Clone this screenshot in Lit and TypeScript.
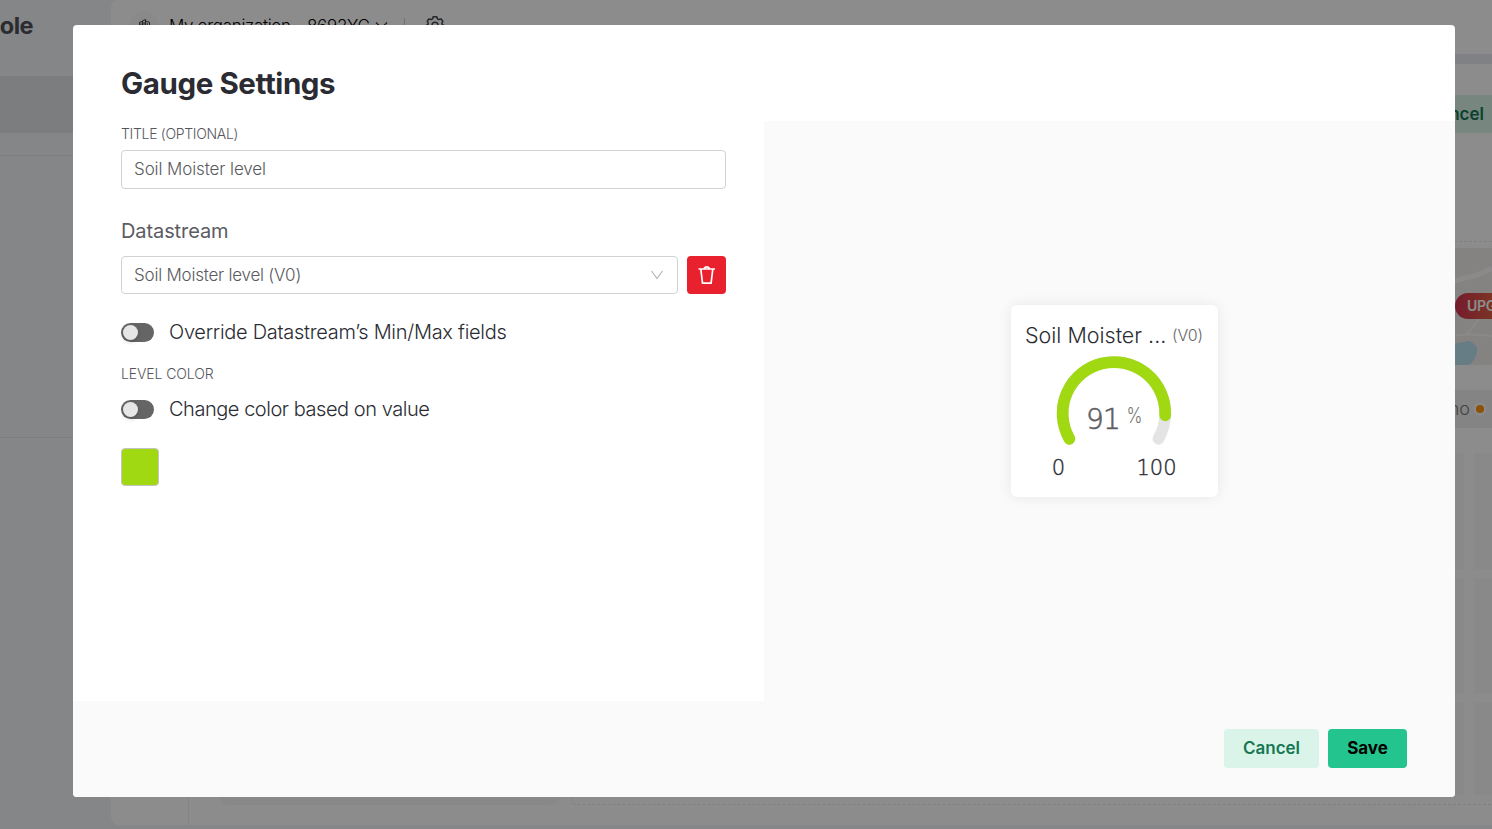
import { LitElement, html, svg, css } from "lit";
import { customElement, property, state } from "lit/decorators.js";

@customElement("gauge-card")
class GaugeCard extends LitElement {
  @property({ type: Number }) value = 91;
  static styles = css`
    :host { display: block; width: 207px; height: 192px; background: #fff; border-radius: 6px; box-shadow: 0 0 14px rgba(0, 0, 0, 0.08); box-sizing: border-box; font-family: Inter, "Liberation Sans", sans-serif; color: #2b2c33; }
    .head { display: flex; align-items: flex-start; height: 51px; padding: 0 15px 0 14px; line-height: 60px; box-sizing: border-box; justify-content: space-between; white-space: nowrap; }
    .name { font-size: 21.5px; font-weight: 300; letter-spacing: 0; }
    .pin { font-size: 16px; font-weight: 300; color: #66676c; letter-spacing: -0.15px; }
    svg { display: block; width: 207px; height: 141px; }
    .track, .level { fill: none; stroke-width: 11.7; stroke-linecap: round; }
    .track { stroke: #e4e4e4; }
    .level { stroke: #a0d911; }
    .num, .lim { font-family: "DejaVu Sans", sans-serif; font-weight: 200; }
    .num { font-size: 28px; letter-spacing: -0.7px; fill: #5c5d63; stroke: #5c5d63; stroke-width: 0.6; }
    .unit { font-size: 21px; font-weight: 300; fill: #777; }
    .lim { font-size: 21px; fill: #2b2c33; stroke: #2b2c33; stroke-width: 0.4; }
  `;
  render() {
    return html`
      <div class="head"><span class="name">Soil Moister ...</span><span class="pin">(V0)</span></div>
      <svg viewBox="0 51 207 141">
        ${svg`
          <path class="track" d="M58.4 133.8A51.3 51.3 0 1 1 147.4 133.8" />
          <path class="level" d="M58.4 133.8A51.3 51.3 0 1 1 154.2 110.3" />
          <text class="num" x="75" y="124">${this.value}</text>
          <text class="unit" x="115.500" y="118" textLength="16" lengthAdjust="spacingAndGlyphs">%</text>
          <text class="lim" x="47.5" y="170" text-anchor="middle">0</text>
          <text class="lim" x="145.500" y="170" text-anchor="middle">100</text>`}
      </svg>`;
  }
}

@customElement("toggle-row")
class ToggleRow extends LitElement {
  @property() label = "";
  static styles = css`
    :host { display: flex; align-items: center; gap: 15px; height: 30px; font-size: 20px; font-weight: 300; color: #2b2c33; }
    .switch { width: 33px; height: 19px; border-radius: 10px; background: #656565; padding: 2px; box-sizing: border-box; }
    .knob { width: 15px; height: 15px; border-radius: 50%; background: #e6e6e6; box-shadow: 0 2px 4px rgba(0, 35, 11, 0.2); }
    .label { white-space: nowrap; letter-spacing: var(--track, 0); }
  `;
  render() {
    return html`<div class="switch"><div class="knob"></div></div><span class="label">${this.label}</span>`;
  }
}

@customElement("console-page")
class ConsolePage extends LitElement {
  static styles = css`
    :host { display: flex; width: 1492px; height: 829px; background: #f3f5f8; overflow: hidden; color: #24252b; }
    * { box-sizing: border-box; }
    .side { width: 111px; flex: none; display: flex; flex-direction: column; }
    .brand { height: 76px; line-height: 52px; font-size: 23.5px; font-weight: 700; width: 33px; display: flex; justify-content: flex-end; letter-spacing: -0.5px; color: #4e5057; }
    .active { height: 57px; background: #e2e3e5; }
    .group { height: 23px; border-bottom: 1px solid #e3e5e8; }
    .group.tall { height: 282px; }
    .main { flex: 1; display: flex; flex-direction: column; min-width: 0; }
    .top { height: 54px; background: #fff; border-top-left-radius: 8px; display: flex; align-items: flex-start; padding-left: 19px; }
    .avatar { width: 28px; height: 28px; margin-top: 11px; border-radius: 50%; background: #f9f9f9; display: flex; align-items: center; justify-content: center; }
    .org { margin-left: 11px; line-height: 52px; font-size: 17px; white-space: pre; font-weight: 300; color: #000; letter-spacing: -0.33px; width: 202px; }
    .chev { margin: 21px 0 0 4px; }
    .bar { width: 1px; height: 16px; margin: 18px 20px 0 16px; background: #ccc; }
    .gear { margin-top: 15px; }
    .strip { height: 10px; background: #eaecf0; }
    .body { flex: 1; background: #fff; display: flex; border-bottom-left-radius: 8px; min-height: 0; }
    .foot { height: 4px; }
    .rail { width: 78px; border-right: 1px solid #f0f0f0; }
    .tools { width: 343px; margin: 77px 10px 20px 29px; background: #f7f7f7; border-radius: 12px; }
    .work { flex: 1; min-width: 0; display: flex; flex-direction: column; align-items: flex-end; }
    .cancel { width: 100px; height: 38px; margin: 31px -12px 108px 0; padding-right: 20px; text-align: right; background: #daf4ea; color: #167852; font-weight: 600; font-size: 17px; line-height: 38px; }
    .canvas { width: 100%; height: 564px; border: 1px dashed #eaeaea; border-right: 0; border-bottom-left-radius: 6px; display: flex; flex-direction: column; align-items: flex-end; padding-top: 6px; }
    .map { width: 80px; height: 117px; background: #f1eeeb; display: flex; flex-direction: column; }
    .map svg { display: block; }
    .tag { width: 80px; height: 38px; margin: 25px 0; background: #f0f0f0; display: flex; align-items: center; justify-content: flex-end; gap: 6px; padding-right: 8px; font-size: 18px; font-weight: 300; color: #77787c; }
    .tag span { margin-top: -2px; }
    .dot { width: 8px; height: 8px; border-radius: 50%; background: #ff930d; box-shadow: 0 0 0 3px #fafafa; }
    .cells { display: grid; grid-template-columns: 60px 60px; grid-template-rows: 116px 116px 92px; gap: 9px 10px; margin-right: -42px; }
    .cell { background: #f9f9f9; }
    .pilltext { font-size: 14px; font-weight: 600; fill: #fff; letter-spacing: -0.3px; }
  `;
  render() {
    return html`
      <div class="side">
        <div class="brand">ole</div>
        <div class="active"></div>
        <div class="group"></div>
        <div class="group tall"></div>
      </div>
      <div class="main">
        <div class="top">
          <div class="avatar">
            <svg width="13" height="14" viewBox="0 0 13 14" fill="none" stroke="#38424a" stroke-width="1"><path d="M4.500 12V2.800L7.500 1.500v10.500M4.500 3.500l-3 .8V12h10V4.300L7.500 3M6 4v7M3 5.500v5M9.200 5v6" /></svg>
          </div>
          <span class="org">My organization - 8692YC</span>
          <svg class="chev" width="13" height="9" viewBox="0 0 13 9" fill="none" stroke="#333" stroke-width="1.1"><path d="M1 1.5 6.5 7 12 1.5" /></svg>
          <i class="bar"></i>
          <svg class="gear" width="20" height="20" viewBox="0 0 20 20" fill="none" stroke="#444950" stroke-width="1.5" stroke-linejoin="round">
            <path d="M8.200 1.800h3.600l.6 2 1.400.7 2.400-.5 1.600 2.400-.9 1.700.3 1.400 2 1.100-.7 3.200-2.100.2-1 1.200.3 2.100-3.200 1.400L10 17.300l-2.400 1.400-3.200-1.400.3-2.100-1-1.200-2.100-.2-.7-3.200 2-1.100.3-1.400-.9-1.700L3.800 4l2.400.5 1.400-.7z" /><circle cx="10" cy="10.300" r="3" />
          </svg>
        </div>
        <div class="strip"></div>
        <div class="body">
          <div class="rail"></div>
          <div class="tools"></div>
          <div class="work">
            <div class="cancel">Cancel</div>
            <div class="canvas">
              <div class="map">
                <svg width="80" height="117" viewBox="1412 248 80 117">
                  <path d="M1440 290C1460 274 1475 280 1492 268" stroke="#fbfbfb" stroke-width="5" fill="none" />
                  <path d="M1440 338Q1465 332 1492 336M1467 334l14-17" stroke="#fafafa" stroke-width="2" fill="none" />
                  <path d="M1440 365v-15l17-7 12-2q10 4 8 11-2 9-8 13z" fill="#bce3f3" />
                  <defs><linearGradient id="pill" x1="1455" x2="1515" gradientUnits="userSpaceOnUse"><stop stop-color="#d53352" /><stop offset="1" stop-color="#e87a3a" /></linearGradient></defs>
                  <rect x="1455" y="293" width="110" height="26" rx="13" fill="url(#pill)" />
                  <text class="pilltext" x="1467" y="311">UPG</text>
                </svg>
              </div>
              <div class="tag"><span>no</span><i class="dot"></i></div>
              <div class="cells">${[1, 2, 3, 4, 5, 6].map(() => html`<div class="cell"></div>`)}</div>
            </div>
          </div>
        </div>
        <div class="foot"></div>
      </div>`;
  }
}

@customElement("app-root")
class AppRoot extends LitElement {
  @state() level = 91;
  static styles = css`
    :host { display: block; position: relative; width: 1492px; height: 829px; overflow: hidden; font-family: Inter, "Liberation Sans", sans-serif; }
    * { box-sizing: border-box; }
    .mask { position: absolute; inset: 0; background: rgba(0, 0, 0, 0.45); padding: 25px 37px 32px 73px; }
    .modal { height: 772px; background: #fff; border-radius: 4px; overflow: hidden; display: flex; flex-direction: column; }
    h1 { margin: 0; height: 96px; padding: 0 48px; line-height: 117px; font-size: 29.5px; font-weight: 650; letter-spacing: -0.4px; color: #2b2c33; white-space: nowrap; }
    .cols { display: flex; height: 580px; }
    .form { width: 691px; padding: 0 38px 0 48px; display: flex; flex-direction: column; }
    .preview { flex: 1; background: #fafafa; padding: 184px 0 0 247px; }
    .cap { font-size: 14px; font-weight: 300; color: #55565c; line-height: 20px; letter-spacing: -0.3px; margin: 3px 0 6px; white-space: nowrap; }
    .field { height: 39px; border: 1px solid #d2d2d4; border-radius: 4px; display: flex; align-items: center; justify-content: space-between; padding: 0 13px 0 12px; font-size: 17px; font-weight: 300; color: #595a60; white-space: nowrap; }
    .title span { letter-spacing: -0.1px; margin-top: -2px; }
    .select { height: 38px; flex: 1; }
    .select span { letter-spacing: -0.22px; }
    h2 { margin: 27px 0 0; height: 40px; line-height: 30px; font-size: 20px; font-weight: 400; color: #5b5c62; letter-spacing: -0.1px; }
    .row { display: flex; gap: 9px; }
    .trash { width: 39px; height: 38px; background: #e9202d; border-radius: 4px; display: flex; align-items: center; justify-content: center; padding-bottom: 1px; }
    .one { margin-top: 23px; --track: -0.28px; }
    .two { --track: -0.46px; }
    .level { margin: 17px 0 10px; letter-spacing: -0.1px; }
    .swatch { width: 38px; height: 38px; margin-top: 24px; background: #a0d911; border: 1px solid #c4c4c4; border-radius: 4px; }
    .footer { flex: 1; background: #fafafa; display: flex; justify-content: flex-end; gap: 9px; padding: 28px 48px 0 0; }
    .btn { height: 39px; border-radius: 4px; font-size: 17px; font-weight: 600; display: flex; align-items: center; justify-content: center; padding-bottom: 1px; }
    .quiet { width: 95px; background: #daf4ea; color: #167852; }
    .main { width: 79px; background: #24c48e; color: #000; font-weight: 700; }
  `;
  render() {
    return html`
      <console-page></console-page>
      <div class="mask">
        <div class="modal">
          <h1>Gauge Settings</h1>
          <div class="cols">
            <div class="form">
              <div class="cap">TITLE (OPTIONAL)</div>
              <div class="field title"><span>Soil Moister level</span></div>
              <h2>Datastream</h2>
              <div class="row">
                <div class="field select">
                  <span>Soil Moister level (V0)</span>
                  <svg width="14" height="10" viewBox="0 0 14 10" fill="none" stroke="#b4b4b4" stroke-width="1.2"><path d="M1.500 1 7 8.500 12.500 1" /></svg>
                </div>
                <div class="trash">
                  <svg width="18" height="20" viewBox="0 0 18 20" fill="none" stroke="#fff" stroke-width="1.700"><path d="M.5 4h16.500M6.200 3.300q.8-1.500 2.600-1.500t2.600 1.500M2.800 4l1.700 14.200h8.600L14.800 4" /></svg>
                </div>
              </div>
              <toggle-row class="one" label="Override Datastream’s Min/Max fields"></toggle-row>
              <div class="cap level">LEVEL COLOR</div>
              <toggle-row class="two" label="Change color based on value"></toggle-row>
              <div class="swatch"></div>
            </div>
            <div class="preview"><gauge-card .value=${this.level}></gauge-card></div>
          </div>
          <div class="footer">
            <div class="btn quiet">Cancel</div>
            <div class="btn main">Save</div>
          </div>
        </div>
      </div>`;
  }
}
